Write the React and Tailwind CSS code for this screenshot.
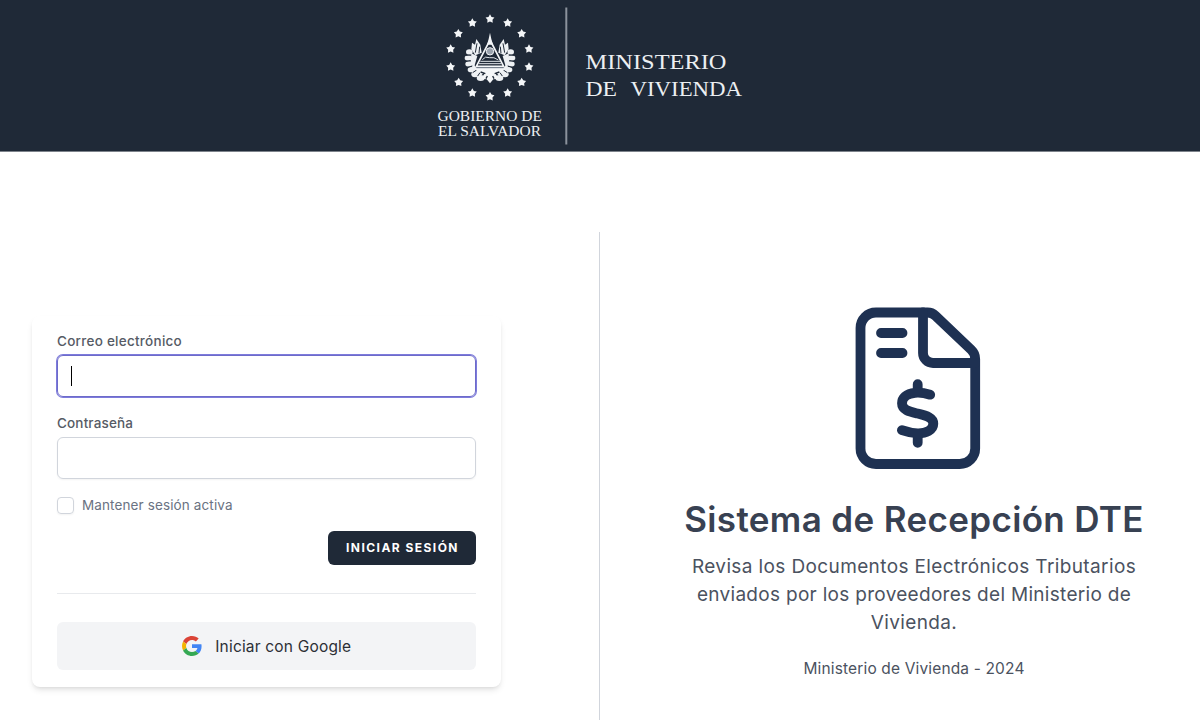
const STARS = [
  [180, 57], [233, 69], [275, 101], [297, 147], [297, 201], [275, 247], [233, 279],
  [180, 290], [127, 279], [86, 247], [62, 201], [62, 147], [85, 101], [127, 69],
];

function starPoints(cx, cy, r) {
  return Array.from({ length: 10 }, (_, i) => {
    const a = -Math.PI / 2 + (i * Math.PI) / 5;
    const k = i % 2 ? r * 0.56 : r;
    return `${(cx + k * Math.cos(a)).toFixed(1)},${(cy + k * Math.sin(a)).toFixed(1)}`;
  }).join(' ');
}

function EmblemSide() {
  return (
    <g>
      {/* flags */}
      <path d="M139 117L151 134L155 158L136 166L124 148L126 128L135 134Z" fill="#eef1f4" />
      <path d="M141 130L136 158M149 140L147 160" stroke="#1f2937" strokeWidth="3" />
      {/* laurel leaves */}
      <g fill="#eef1f4">
        <ellipse cx="118" cy="156" rx="10" ry="8" />
        <ellipse cx="115" cy="174" rx="11" ry="8" />
        <ellipse cx="117" cy="192" rx="11" ry="8" />
        <ellipse cx="124" cy="209" rx="11" ry="8" />
        <ellipse cx="135" cy="223" rx="11" ry="9" />
        <ellipse cx="152" cy="234" rx="12" ry="9" />
        <path d="M124 160L142 168L134 196L138 205L160 220L150 230L130 214L122 190Z" />
      </g>
      <path d="M108 166L121 165M107 184L121 182M112 202L127 198M128 218L140 210M143 228L150 218" stroke="#1f2937" strokeWidth="3" />
    </g>
  );
}

function MinistryLogo() {
  return (
    <svg className="h-[151px] w-[330px]" viewBox="0 0 330 151" role="img">
      <g transform="scale(0.33333)" fill="none">
        {STARS.map(([x, y]) => (
          <polygon key={`${x}-${y}`} points={starPoints(x, y, 14)} fill="#f4f6f8" />
        ))}
        <EmblemSide />
        <g transform="translate(360 0) scale(-1 1)">
          <EmblemSide />
        </g>
        <path d="M180 120L221 199H139Z" fill="#1f2937" stroke="#f4f6f8" strokeWidth="5" />
        <path d="M180 98L184 117L189 134H171L176 117Z" fill="#f4f6f8" />
        <circle cx="180" cy="154" r="11" fill="#9aa2ad" stroke="#f4f6f8" strokeWidth="3" />
        <path d="M157 179Q166 167 178 173Q192 170 205 180M151 184H211M146 191H214" stroke="#dfe3e8" strokeWidth="3" />
        {/* ribbon */}
        <path d="M133 202H227L217 215L196 220L206 236L190 238L180 250L170 238L154 236L164 220L143 215Z" fill="#f4f6f8" />
        <path d="M139 203H221" stroke="#657080" strokeWidth="3" />
        <path d="M152 216L166 221M208 216L194 221M172 228L168 236M188 228L192 236" stroke="#1f2937" strokeWidth="4" />
      </g>
      <g fill="#eceff2" fontFamily="'Liberation Serif', serif">
        <text x="7.5" y="121" fontSize="14" textLength="104.5" lengthAdjust="spacingAndGlyphs">GOBIERNO DE</text>
        <text x="8" y="136.2" fontSize="14" textLength="103" lengthAdjust="spacingAndGlyphs">EL SALVADOR</text>
        <text x="155.5" y="69" fontSize="20.5" textLength="141" lengthAdjust="spacingAndGlyphs">MINISTERIO</text>
        <text x="155.5" y="96" fontSize="20.5" textLength="31.5" lengthAdjust="spacingAndGlyphs">DE</text>
        <text x="200.5" y="96" fontSize="20.5" textLength="111.5" lengthAdjust="spacingAndGlyphs">VIVIENDA</text>
      </g>
      <rect x="135.3" y="7.5" width="2" height="137" fill="#8b929c" />
    </svg>
  );
}

function InvoiceIcon() {
  return (
    <svg className="h-[185px] w-[160px]" viewBox="0 0 160 185" fill="none" stroke="#1e3152" strokeWidth="9.8" strokeLinecap="round" strokeLinejoin="round">
      <path d="M36 17.5H87.5Q92 17.5 95.3 20.6L131.2 54.8Q135.2 58.6 135.2 64V153.5A15.5 15.5 0 0 1 119.7 169H36A15.5 15.5 0 0 1 20.5 153.5V33A15.5 15.5 0 0 1 36 17.5Z" />
      <path d="M83 17.5V58A10 10 0 0 0 93 68H135" />
      <path d="M41 38H62.5M41 58H62.5" />
      <path d="M77.7 89.2V97M77.7 139V147.8" />
      <path d="M90.2 99.7C84 97.8 79 97.4 75 97.8C66 98.6 62 103 62 108.3C62 115 69.5 116.6 77.7 118.6C87 120.8 93.3 122.8 93.3 128.8C93.3 135 86 138.5 77.7 138.3C71 138.1 67 137 61.9 135.2" />
    </svg>
  );
}

function GoogleIcon() {
  return (
    <svg className="h-5 w-5" viewBox="0 0 48 48">
      <path fill="#db4437" d="M24 9.5c3.54 0 6.71 1.22 9.21 3.6l6.85-6.85C35.9 2.38 30.47 0 24 0 14.62 0 6.51 5.38 2.56 13.22l7.98 6.19C12.43 13.72 17.74 9.5 24 9.5z" />
      <path fill="#4285f4" d="M46.98 24.55c0-1.57-.15-3.09-.38-4.55H24v9.02h12.94c-.58 2.96-2.26 5.48-4.78 7.18l7.73 6c4.51-4.18 7.09-10.36 7.09-17.65z" />
      <path fill="#f4b400" d="M10.53 28.59c-.48-1.45-.76-2.99-.76-4.59s.27-3.14.76-4.59l-7.98-6.19C.92 16.46 0 20.12 0 24c0 3.88.92 7.54 2.56 10.78l7.97-6.19z" />
      <path fill="#34a853" d="M24 48c6.48 0 11.93-2.13 15.89-5.81l-7.73-6c-2.15 1.45-4.92 2.3-8.16 2.3-6.26 0-11.57-4.22-13.47-9.91l-7.98 6.19C6.51 42.62 14.62 48 24 48z" />
    </svg>
  );
}

export default function App() {
  return (
    <div className="flex h-[720px] w-[1200px] flex-col overflow-hidden bg-white font-['Inter',sans-serif] text-gray-700">
      <header className="flex h-[152px] shrink-0 border-b border-[#7d838b] bg-[#1f2937] pl-[430px]">
        <MinistryLogo />
      </header>

      <main className="grid flex-1 grid-cols-[598.5px_1fr] pt-20">
        <section className="pt-[84px] pl-[32px]">
          <form className="flex w-[469px] flex-col rounded-lg bg-white px-[25px] pt-[15px] pb-[17px] shadow-md">
            <label className="h-5 text-[13.5px] leading-5 font-medium tracking-[0.26px] text-[#565b65]">Correo electrónico</label>
            <div className="mt-1 flex h-[42px] items-center rounded-md border border-[#6d6bc9] pl-[13px] ring-1 ring-[#7d7bdc]">
              <span className="h-5 w-px bg-black" />
            </div>
            <label className="mt-4 h-5 text-[13.5px] leading-5 font-medium tracking-[0.15px] text-[#565b65]">Contraseña</label>
            <div className="mt-1 h-[42px] rounded-md border border-gray-300 shadow-xs" />
            <div className="mt-4 flex h-5 items-center gap-2">
              <span className="h-[17px] w-[17px] rounded border border-gray-300 shadow-xs" />
              <span className="pt-px text-[13.5px] tracking-[0.12px] text-gray-500">Mantener sesión activa</span>
            </div>
            <div className="mt-[16px] flex justify-end">
              <button type="button" className="h-[34px] w-[148px] rounded-md bg-[#1f2937] pl-px text-[12px] font-bold tracking-[1.45px] whitespace-nowrap text-white">
                INICIAR SESIÓN
              </button>
            </div>
            <hr className="mt-7 border-[#e8eaed]" />
            <button type="button" className="mt-7 flex h-12 items-center justify-center gap-[13.5px] rounded-md bg-[#f3f4f6] text-[15.5px] tracking-[0.18px] text-[#2c2f35]">
              <GoogleIcon />
              <span className="pt-px">Iniciar con Google</span>
            </button>
          </form>
        </section>

        <section className="flex flex-col items-center border-l border-gray-300 pt-[63px] pl-[28.5px] text-center">
          <div className="pl-[11px]">
            <InvoiceIcon />
          </div>
          <h1 className="mt-[19px] text-[35px] leading-10 font-semibold tracking-[0.35px] whitespace-nowrap text-[#384152]">Sistema de Recepción DTE</h1>
          <p className="mt-[14px] text-[19px] leading-7 tracking-[0.38px] whitespace-nowrap text-[#4b5260]">
            Revisa los Documentos Electrónicos Tributarios
            <br />
            <span className="tracking-[0.3px]">enviados por los proveedores del Ministerio de</span>
            <br />
            Vivienda.
          </p>
          <p className="mt-[20px] text-[15.5px] leading-6 tracking-[0.15px] text-[#4b5260]">Ministerio de Vivienda - 2024</p>
        </section>
      </main>
    </div>
  );
}
